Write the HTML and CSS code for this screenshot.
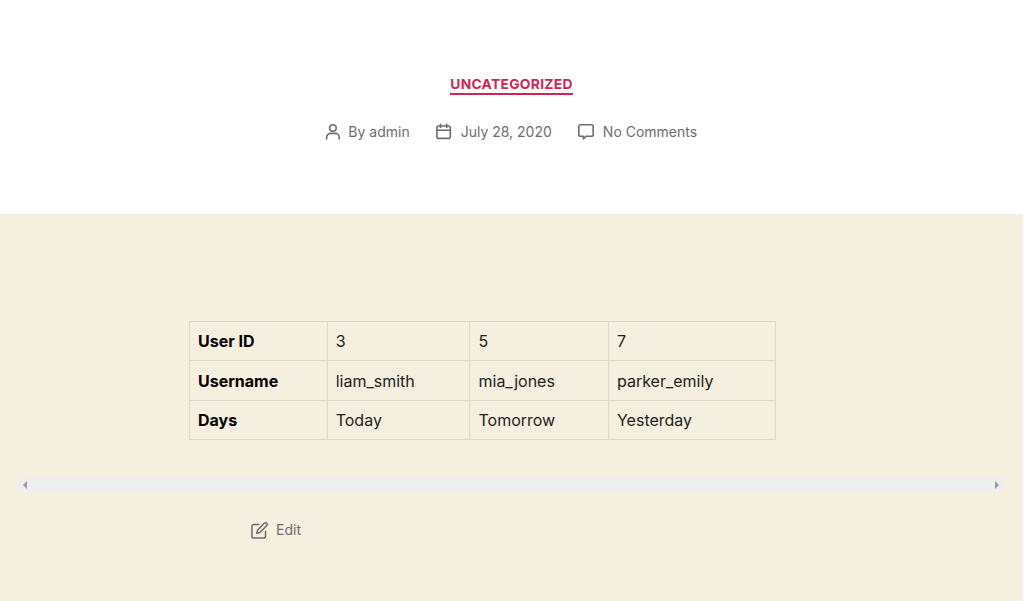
FILE: index.html
```html
<!DOCTYPE html>
<html lang="en">
<head>
<meta charset="utf-8">
<title>Post</title>
<link rel="stylesheet" href="styles.css">
</head>
<body>
<div class="page">
  <header class="entry-header">
    <a class="category" href="#">UNCATEGORIZED</a>
    <ul class="meta">
      <li class="meta-item">
        <svg class="icon" viewBox="0 0 18 18" aria-hidden="true"><circle cx="8.9" cy="5" r="3.3"/><path d="M2.6 16v-1.6a4 4 0 0 1 4-4h4.6a4 4 0 0 1 4 4V16"/></svg>
        <span>By admin</span>
      </li>
      <li class="meta-item">
        <svg class="icon" viewBox="0 0 18 18" aria-hidden="true"><rect x="0.9" y="3" width="13.4" height="12.4" rx="2"/><path d="M.9 7.3h13.4M4.5 1.4v3M10.7 1.4v3"/></svg>
        <span>July 28, 2020</span>
      </li>
      <li class="meta-item">
        <svg class="icon" viewBox="0 0 18 18" aria-hidden="true"><path d="M2.6 1.8h10.8a1.8 1.8 0 0 1 1.8 1.8v7.8a1.8 1.8 0 0 1-1.8 1.8H8.2l-2.8 2.6v-2.6H2.6a1.8 1.8 0 0 1-1.8-1.8V3.6a1.8 1.8 0 0 1 1.8-1.8z"/></svg>
        <span>No Comments</span>
      </li>
    </ul>
  </header>
  <main class="content">
    <table class="data">
      <colgroup><col class="c1"><col class="c2"><col class="c3"><col class="c4"></colgroup>
      <tbody>
        <tr><th>User ID</th><td>3</td><td>5</td><td>7</td></tr>
        <tr><th>Username</th><td>liam_smith</td><td>mia_jones</td><td>parker_emily</td></tr>
        <tr><th>Days</th><td>Today</td><td>Tomorrow</td><td>Yesterday</td></tr>
      </tbody>
    </table>
    <div class="scrollbar"><span class="arrow left"></span><span class="arrow right"></span></div>
    <a class="edit" href="#">
      <svg class="icon" viewBox="0 0 18 18" aria-hidden="true"><path d="M8.2 2.6H3a2 2 0 0 0-2 2V15a2 2 0 0 0 2 2h10.4a2 2 0 0 0 2-2V9.8"/><path d="M14 1.4a1.8 1.8 0 0 1 2.6 2.6L9.4 11.2l-3.3.8.8-3.3z"/></svg>
      <span>Edit</span>
    </a>
  </main>
</div>
</body>
</html>
```
FILE: styles.css
```css
* { box-sizing: border-box; }
html, body { margin: 0; padding: 0; height: 100%; overflow: hidden; }
body { font-family: Inter, "Liberation Sans", sans-serif; color: #000; background: #fff; }
.page { height: 601px; display: flex; flex-direction: column; margin-right: 1px; }
.entry-header { height: 214px; background: #fff; display: flex; flex-direction: column; align-items: center; padding-top: 77px; }
.category { font-size: 13.8px; line-height: 15px; font-weight: 700; letter-spacing: 0.3px; color: #cd2653; text-decoration: none; border-bottom: 2px solid #cd2653; padding-bottom: 1px; height: 18px; }
.meta { list-style: none; margin: 27px 2px 0 0; padding: 0; display: flex; gap: 26.5px; color: #6d6d6d; font-size: 14px; line-height: 20px; }
.meta-item { display: flex; align-items: center; gap: 6.5px; }
.icon { width: 18px; height: 18px; fill: none; stroke: #6d6d6d; stroke-width: 1.6; stroke-linecap: round; stroke-linejoin: round; flex: none; }
.content { flex: 1; background: #f5efe0; padding-top: 107px; display: flex; flex-direction: column; }
.data { border-collapse: collapse; table-layout: fixed; width: 586.5px; margin-left: 189px; font-size: 16px; line-height: 24px; color: #222; }
.c1 { width: 137.7px; }
.c2 { width: 142.8px; }
.c3 { width: 138.5px; }
.c4 { width: 167.5px; }
.data th, .data td { border: 1px solid #dcd7ca; padding: 7px 8px; text-align: left; height: 39.4px; }
.data th { font-weight: 700; color: #000; }
.data td { font-weight: 400; }
.scrollbar { margin: 37px 0 0 18px; width: 986px; height: 15px; background: #eeeeee; display: flex; justify-content: space-between; align-items: center; padding: 0 5px; }
.arrow { width: 0; height: 0; border-top: 4px solid transparent; border-bottom: 4px solid transparent; }
.arrow.left { border-right: 4px solid #9a9a9a; }
.arrow.right { border-left: 4px solid #9a9a9a; }
.edit { margin: 29px 0 0 251px; display: flex; align-items: center; gap: 8px; color: #6d6d6d; font-size: 14px; line-height: 18px; text-decoration: none; align-self: flex-start; }
.edit .icon { width: 17px; height: 17px; }
```
